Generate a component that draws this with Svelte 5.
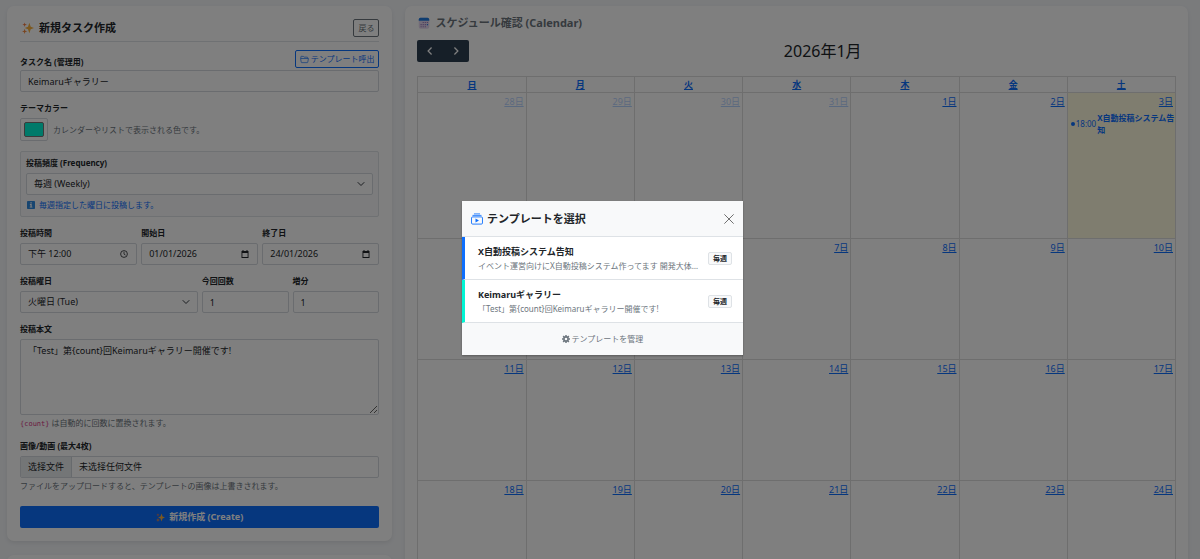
<script lang="ts">
    let taskName = $state("Keimaruギャラリー");
    let themeColor = $state("#00f5d4");
    let frequency = $state("weekly");
    let postTime = $state("下午 12:00");
    let startDate = $state("01/01/2026");
    let endDate = $state("24/01/2026");
    let weekday = $state("tue");
    let count = $state("1");
    let increment = $state("1");
    let body = $state("「Test」第{count}回Keimaruギャラリー開催です!");
    let modalOpen = $state(true);

    const dayNames = ["日", "月", "火", "水", "木", "金", "土"];
    const gridStart = new Date(2025, 11, 28);

    const weeks = [0, 1, 2, 3].map((week) =>
        dayNames.map((_, i) => {
            const date = new Date(gridStart);
            date.setDate(gridStart.getDate() + week * 7 + i);
            const inMonth = date.getMonth() === 0;
            return {
                day: date.getDate(),
                other: !inMonth,
                today: inMonth && date.getDate() === 3
            };
        })
    );

    const templates = [
        {
            name: "X自動投稿システム告知",
            text: "イベント運営向けにX自動投稿システム作ってます 開発大体終わりました",
            color: "#0d6efd",
            label: "毎週"
        },
        {
            name: "Keimaruギャラリー",
            text: "「Test」第{count}回Keimaruギャラリー開催です!",
            color: "#00f5d4",
            label: "毎週"
        }
    ];
</script>

{#snippet sparkles()}
    <svg class="emoji" viewBox="0 0 16 16" aria-hidden="true">
        <path fill="#f9b13c" d="M9.8 1 11.6 6.2 16 8 11.6 9.8 9.8 15 8 9.8 3.6 8 8 6.2z"/>
        <path fill="#f58a3c" d="M3.5 9 4.4 11.6 7 12.500 4.400 13.400 3.500 16 2.600 13.400 0 12.500 2.600 11.600z"/>
        <path fill="#f5793c" d="M3.500 .5 4.200 2.800 6.500 3.500 4.200 4.200 3.500 6.500 2.800 4.200.5 3.500 2.800 2.800z"/>
    </svg>
{/snippet}

{#snippet dateIcon()}
    <svg class="picker" viewBox="0 0 16 16" aria-hidden="true">
        <path fill="currentColor" fill-rule="evenodd" d="M3 0h2v2h6V0h2v2h2v14H1V2h2zm-.2 6v8.200h10.400V6z"/>
    </svg>
{/snippet}

<div class="page">
    <div class="column">
        <form class="card" onsubmit={(e) => e.preventDefault()}>
            <header class="form-head">
                <h1>{@render sparkles()} 新規タスク作成</h1>
                <button class="btn-outline" type="button">戻る</button>
            </header>

            <div class="field">
                <div class="name-row">
                    <label for="task-name">タスク名 (管理用)</label>
                    <button class="btn-outline primary" type="button" onclick={() => (modalOpen = true)}>
                        <svg viewBox="0 0 16 16" aria-hidden="true">
                            <path fill="none" stroke="currentColor" stroke-width="1.2" stroke-linejoin="round" d="M1.5 6V3.2q0-.8.8-.8h3.6l1.6 1.4h5.2q.9 0 .9.9V6M1 6.2h14l-1.2 6.6q-.1.8-.9.8H3.1q-.8 0-.9-.8z"/>
                        </svg>
                        テンプレート呼出
                    </button>
                </div>
                <input class="control" id="task-name" bind:value={taskName}/>
            </div>

            <div class="field">
                <label for="theme-color">テーマカラー</label>
                <div class="color-row">
                    <input id="theme-color" type="color" bind:value={themeColor}/>
                    <span class="help">カレンダーやリストで表示される色です。</span>
                </div>
            </div>

            <div class="field frequency">
                <label for="frequency">投稿頻度 (Frequency)</label>
                <select class="control" id="frequency" bind:value={frequency}>
                    <option value="weekly">毎週 (Weekly)</option>
                </select>
                <p class="info">
                    <svg viewBox="0 0 16 16" aria-hidden="true">
                        <rect width="16" height="16" rx="1.5" fill="#2f8be0"/>
                        <path fill="#fff" d="M6.8 2.6h2.6v2.2H6.8zM5.8 6.2h3.6v5.4h1.4v1.6H5.4v-1.6h1.5V7.8H5.8z"/>
                    </svg>
                    毎週指定した曜日に投稿します。
                </p>
            </div>

            <div class="field thirds">
                <div>
                    <label for="post-time">投稿時間</label>
                    <div class="control with-icon">
                        <input id="post-time" bind:value={postTime}/>
                        <svg class="picker" viewBox="0 0 16 16" aria-hidden="true">
                            <circle cx="8" cy="8" r="6.8" fill="none" stroke="currentColor" stroke-width="1.6"/>
                            <path fill="none" stroke="currentColor" stroke-width="1.5" d="M8 3.5v4.800l3 1.800"/>
                        </svg>
                    </div>
                </div>
                <div>
                    <label for="start-date">開始日</label>
                    <div class="control with-icon">
                        <input id="start-date" bind:value={startDate}/>
                        {@render dateIcon()}
                    </div>
                </div>
                <div>
                    <label for="end-date">終了日</label>
                    <div class="control with-icon">
                        <input id="end-date" bind:value={endDate}/>
                        {@render dateIcon()}
                    </div>
                </div>
            </div>

            <div class="field quarters">
                <div>
                    <label for="weekday">投稿曜日</label>
                    <select class="control" id="weekday" bind:value={weekday}>
                        <option value="tue">火曜日 (Tue)</option>
                    </select>
                </div>
                <div>
                    <label for="count">今回回数</label>
                    <input class="control" id="count" bind:value={count}/>
                </div>
                <div>
                    <label for="increment">増分</label>
                    <input class="control" id="increment" bind:value={increment}/>
                </div>
            </div>

            <div class="field">
                <label for="body">投稿本文</label>
                <textarea class="control" id="body" bind:value={body}></textarea>
                <p class="help"><code>{"{count}"}</code> は自動的に回数に置換されます。</p>
            </div>

            <div class="field last">
                <label for="media">画像/動画 (最大4枚)</label>
                <label class="control file" for="media">
                    <span class="file-button">选择文件</span>
                    <span>未选择任何文件</span>
                    <input id="media" type="file" multiple/>
                </label>
                <p class="help">ファイルをアップロードすると、テンプレートの画像は上書きされます。</p>
            </div>

            <button class="submit" type="submit">{@render sparkles()} 新規作成 (Create)</button>
        </form>

        <section class="card next"></section>
    </div>

    <section class="card calendar">
        <h2>
            <svg class="emoji" viewBox="0 0 16 16" aria-hidden="true">
                <rect x="1" y="1" width="14" height="14.5" rx="2.5" fill="#e4d6ef"/>
                <path fill="#1f7be0" d="M1 5V3.2Q1 1 3.2 1h9.6Q15 1 15 3.2V5z"/>
                <path fill="#9a78bd" d="M6.2 6.6h1.5v1.5H6.2zM9 6.6h1.5v1.5H9zM3.4 9.4h1.500v1.500H3.400zM6.200 9.400h1.500v1.500H6.200zM9 9.400h1.500v1.500H9zM3.400 12.200h1.500v1.500H3.400zM6.200 12.200h1.500v1.500H6.200zM9 12.200h1.500v1.500H9zM11.800 6.600h1.500v1.500h-1.500z"/>
                <path fill="#1f7be0" d="M11.8 9.4h1.6V11h-1.6z"/>
            </svg>
            スケジュール確認 (Calendar)
        </h2>

        <div class="toolbar">
            <div class="nav">
                <button type="button" aria-label="前月">
                    <svg viewBox="0 0 16 16"><path d="M10.5 2.5 5 8l5.5 5.5"/></svg>
                </button>
                <button type="button" aria-label="翌月">
                    <svg viewBox="0 0 16 16"><path d="M5.5 2.5 11 8l-5.5 5.5"/></svg>
                </button>
            </div>
            <h3>2026年1月</h3>
            <div></div>
        </div>

        <table>
            <thead>
                <tr>
                    {#each dayNames as name}
                        <th><a href="#day">{name}</a></th>
                    {/each}
                </tr>
            </thead>
            <tbody>
                {#each weeks as week}
                    <tr>
                        {#each week as cell}
                            <td class:other={cell.other} class:today={cell.today}>
                                <a class="day" href="#day">{cell.day}日</a>
                                {#if cell.today}
                                    <div class="event">
                                        <span class="dot"></span>
                                        <span>18:00</span>
                                        <strong>X自動投稿システム告知</strong>
                                    </div>
                                {/if}
                            </td>
                        {/each}
                    </tr>
                {/each}
            </tbody>
        </table>
    </section>
</div>

{#if modalOpen}
    <div class="backdrop">
        <div class="modal" role="dialog" aria-modal="true" aria-labelledby="modal-title">
            <header class="modal-head">
                <svg viewBox="0 0 16 16" aria-hidden="true">
                    <path fill="none" stroke="currentColor" stroke-linecap="round" stroke-width="1.1" d="M4.5 1.2h7M2.5 3.2h11"/>
                    <rect x=".7" y="5.2" width="14.6" height="9.6" rx="1.5" fill="none" stroke="currentColor" stroke-width="1.2"/>
                    <path fill="currentColor" d="M6 7.2v5.6l4.6-2.8z"/>
                </svg>
                <h2 id="modal-title">テンプレートを選択</h2>
                <button type="button" aria-label="閉じる" onclick={() => (modalOpen = false)}>
                    <svg viewBox="0 0 16 16"><path stroke="currentColor" stroke-width="1.5" stroke-linecap="round" d="m1 1 14 14M15 1 1 15"/></svg>
                </button>
            </header>
            {#each templates as template}
                <button class="item" type="button" style:border-left-color={template.color}>
                    <span class="item-text">
                        <strong>{template.name}</strong>
                        <span>{template.text}</span>
                    </span>
                    <span class="badge">{template.label}</span>
                </button>
            {/each}
            <footer>
                <a href="#templates">
                    <svg viewBox="0 0 16 16" aria-hidden="true">
                        <circle cx="8" cy="8" r="4.2" fill="none" stroke="currentColor" stroke-width="3.2"/>
                        <path stroke="currentColor" stroke-width="3" d="M8 0v3M8 13v3M0 8h3M13 8h3M2.3 2.3l2.2 2.2M11.5 11.5l2.2 2.2M2.3 13.7l2.2-2.2M11.5 4.5l2.2-2.2"/>
                    </svg>
                    テンプレートを管理
                </a>
            </footer>
        </div>
    </div>
{/if}

<style>
    :global(body) {
        overflow: hidden;
        background: #f4f6f9;
        color: #212529;
        font: 9px/12px "Noto Sans", "Noto Sans CJK JP", sans-serif;
    }

    :global(*) {
        box-sizing: border-box;
    }

    h1, h2, h3, p {
        margin: 0;
    }

    button, input, select, textarea {
        font: inherit;
        color: inherit;
    }

    button {
        cursor: pointer;
    }

    a {
        color: #0d6efd;
    }

    .page {
        display: grid;
        grid-template-columns: minmax(0, 33fr) minmax(0, 67fr);
        gap: 13px;
        align-items: start;
        height: 100vh;
        padding: 6px 12px 0 7px;
        overflow: hidden;
    }

    .column {
        display: flex;
        flex-direction: column;
        gap: 14px;
    }

    .card {
        padding: 13px;
        border-radius: 7px;
        background: #fff;
        box-shadow: 0 2px 4px rgba(0, 0, 0, 0.08);
    }

    .next {
        min-height: 200px;
    }

    .emoji {
        width: 12px;
        height: 12px;
        flex: none;
    }

    /* form */

    .form-head {
        display: flex;
        align-items: center;
        justify-content: space-between;
        margin-bottom: 8px;
        padding-bottom: 4px;
        border-bottom: 1px solid #dee2e6;

        & h1 {
            display: flex;
            align-items: center;
            gap: 5px;
            padding-left: 2px;
            font-size: 11px;
        }
    }

    .btn-outline {
        display: flex;
        align-items: center;
        gap: 2px;
        height: 18px;
        padding: 0 4px;
        border: 1px solid #6c757d;
        border-radius: 2px;
        background: none;
        color: #6c757d;
        font-size: 8px;

        &.primary {
            border-color: #0d6efd;
            color: #0d6efd;
        }

        & svg {
            width: 9px;
            height: 9px;
        }
    }

    .field {
        margin-bottom: 10px;

        &.last {
            margin-bottom: 14px;
        }
    }

    label {
        display: block;
        margin-bottom: 4px;
        font-size: 8px;
        font-weight: 700;
    }

    .name-row {
        display: flex;
        align-items: flex-end;
        justify-content: space-between;
        margin-bottom: 2px;

        & label {
            margin: 0;
        }
    }

    .control {
        display: block;
        width: 100%;
        height: 22px;
        margin: 0;
        padding: 0 7px;
        border: 1px solid #d4d9de;
        border-radius: 2px;
        background-color: #fff;
        font-size: 9px;
        font-weight: 400;
    }

    select.control {
        appearance: none;
        padding-right: 20px;
        background: #fff url("data:image/svg+xml,%3Csvg xmlns='http://www.w3.org/2000/svg' viewBox='0 0 16 16'%3E%3Cpath fill='none' stroke='%23343a40' stroke-linecap='round' stroke-linejoin='round' stroke-width='2' d='m2 5 6 6 6-6'/%3E%3C/svg%3E") no-repeat right 7px center / 8px;
    }

    textarea.control {
        height: 76px;
        padding: 5px 7px;
        resize: vertical;
    }

    .with-icon {
        display: flex;
        align-items: center;

        & input {
            flex: 1;
            min-width: 0;
            padding: 0;
            border: 0;
            background: none;
        }
    }

    .picker {
        width: 8px;
        height: 8px;
        margin-right: 1px;
    }

    .color-row {
        display: flex;
        align-items: center;
        gap: 5px;
    }

    input[type="color"] {
        width: 28px;
        height: 23px;
        padding: 3px;
        border: 1px solid #d4d9de;
        border-radius: 2px;
        background: #fff;

        &::-webkit-color-swatch-wrapper {
            padding: 0;
        }

        &::-webkit-color-swatch {
            border-radius: 2px;
        }
    }

    .help {
        margin-top: 2px;
        color: #6c757d;
        font-size: 8px;
    }

    .color-row .help {
        margin: 0;
    }

    code {
        color: #d63384;
        font: 7px/12px "DejaVu Sans Mono", monospace;
    }

    .frequency {
        padding: 5px;
        border: 1px solid #dee2e6;
        border-radius: 2px;
        background: #f8f9fa;
    }

    .info {
        display: flex;
        align-items: center;
        gap: 4px;
        margin-top: 4px;
        padding-left: 1px;
        color: #0d6efd;
        font-size: 8px;

        & svg {
            width: 8px;
            height: 8px;
        }
    }

    .thirds, .quarters {
        display: grid;
        grid-template-columns: repeat(3, minmax(0, 1fr));
        gap: 4px;
    }

    .quarters {
        grid-template-columns: repeat(4, minmax(0, 1fr));

        & div:first-child {
            grid-column: span 2;
        }
    }

    .file {
        position: relative;
        display: flex;
        align-items: center;
        gap: 7px;
        padding: 0;
        overflow: hidden;
        font-family: "Noto Sans", "Noto Sans CJK SC", sans-serif;

        & input {
            position: absolute;
            inset: 0;
            opacity: 0;
        }
    }

    .file-button {
        height: 100%;
        padding: 4px 7px;
        border-right: 1px solid #ced4da;
        background: #e9ecef;
    }

    .submit {
        display: flex;
        align-items: center;
        justify-content: center;
        gap: 4px;
        width: 100%;
        height: 22px;
        border: 0;
        border-radius: 2px;
        background: #0d6efd;
        color: #fff;
        font-weight: 700;

        & .emoji {
            width: 9px;
            height: 9px;
        }
    }

    /* calendar */

    .calendar {
        padding: 11px 12px;

        & h2 {
            display: flex;
            align-items: center;
            gap: 5px;
            margin-bottom: 11px;
            padding-left: 1px;
            color: #6c757d;
            font-size: 11px;
        }
    }

    .toolbar {
        display: flex;
        align-items: center;
        justify-content: space-between;
        height: 22px;
        margin-bottom: 14px;

        & h3 {
            font-size: 16px;
            font-weight: 400;
        }
    }

    .nav {
        display: flex;
        border-radius: 2px;
        background: #2c3e50;

        & button {
            display: flex;
            align-items: center;
            justify-content: center;
            width: 26px;
            height: 22px;
            padding: 0;
            border: 0;
            background: none;
            color: #fff;
        }

        & svg {
            width: 10px;
            height: 10px;
            fill: none;
            stroke: currentColor;
            stroke-width: 2;
        }
    }

    table {
        width: 100%;
        border-collapse: collapse;
        table-layout: fixed;
    }

    th, td {
        padding: 0;
        border: 1px solid #ddd;
    }

    th {
        height: 16px;
    }

    td {
        height: 121px;
        vertical-align: top;
    }

    tbody tr:first-child td {
        height: 146px;
    }

    .day {
        display: block;
        width: fit-content;
        margin-left: auto;
        padding: 3px 2px 0 0;
    }

    .other .day {
        opacity: 0.3;
    }

    .today {
        background: rgba(255, 220, 40, 0.15);
    }

    .event {
        display: flex;
        align-items: center;
        gap: 1px;
        padding: 4px 0 0 3px;
        color: #0d6efd;
        font-size: 8px;

        & strong {
            flex: 1;
        }
    }

    .dot {
        width: 4px;
        height: 4px;
        border-radius: 50%;
        background: #0d6efd;
    }

    /* template picker */

    .backdrop {
        position: fixed;
        inset: 0;
        display: flex;
        align-items: center;
        justify-content: center;
        padding: 0 0 3px 5px;
        background: rgba(0, 0, 0, 0.5);
    }

    .modal {
        width: 281px;
        background: #fff;
        box-shadow: 0 1px 2px rgba(0, 0, 0, 0.3);
    }

    .modal-head {
        display: flex;
        align-items: center;
        gap: 4px;
        height: 36px;
        padding: 0 9px;
        border-bottom: 1px solid #dee2e6;
        background: #f8f9fa;

        & svg {
            width: 12px;
            height: 12px;
            color: #0d6efd;
        }

        & h2 {
            flex: 1;
            font-size: 11px;
        }

        & button {
            display: flex;
            padding: 0;
            border: 0;
            background: none;
        }

        & button svg {
            width: 10px;
            height: 10px;
            color: #666;
        }
    }

    .item {
        display: flex;
        align-items: center;
        gap: 8px;
        width: 100%;
        padding: 8px 11px 7px 13px;
        border: 0;
        border-bottom: 1px solid #dee2e6;
        border-left: 3px solid;
        background: #fff;
        text-align: left;
    }

    .item-text {
        flex: 1;
        min-width: 0;

        & strong {
            display: block;
            line-height: 14px;
        }

        & span {
            display: block;
            overflow: hidden;
            color: #6c757d;
            font-size: 8px;
            line-height: 13px;
            text-overflow: ellipsis;
            white-space: nowrap;
        }
    }

    .badge {
        padding: 0 4px;
        border: 1px solid #dee2e6;
        border-radius: 2px;
        background: #f8f9fa;
        font-size: 7px;
        font-weight: 700;
        line-height: 11px;
    }

    footer {
        display: flex;
        align-items: center;
        justify-content: center;
        height: 32px;
        background: #f8f9fa;

        & a {
            display: flex;
            align-items: center;
            gap: 2px;
            color: #6c757d;
            font-size: 8px;
            text-decoration: none;
        }

        & svg {
            width: 8px;
            height: 8px;
        }
    }
</style>
